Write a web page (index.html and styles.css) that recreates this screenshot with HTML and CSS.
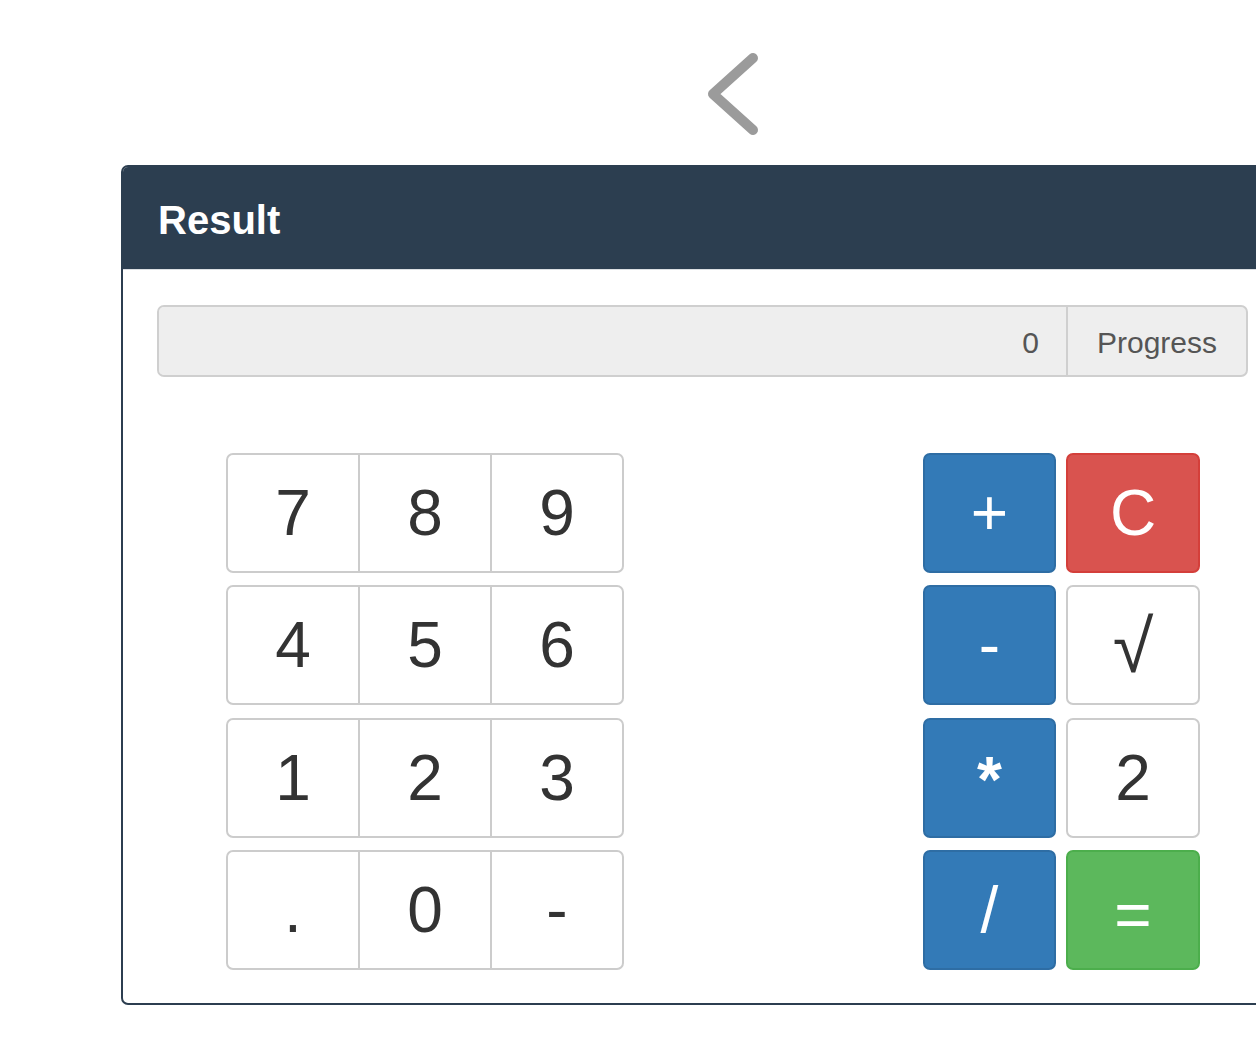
FILE: index.html
```html
<!DOCTYPE html>
<html lang="en">
<head>
<meta charset="utf-8">
<title>Calculator</title>
<link rel="stylesheet" href="styles.css">
</head>
<body>
<div class="pager">
  <a class="prev" href="#" aria-label="Previous">
    <svg width="70" height="100" viewBox="0 0 70 100">
      <polyline points="53,13 13,49 53,85" fill="none" stroke="#9b9b9b" stroke-width="10" stroke-linecap="round" stroke-linejoin="round"/>
    </svg>
  </a>
</div>
<div class="panel">
  <div class="panel-heading"><h3 class="panel-title">Result</h3></div>
  <div class="panel-body">
    <div class="input-group">
      <input class="display" type="text" value="0" readonly>
      <span class="addon">Progress</span>
    </div>
    <div class="pad">
      <div class="digits">
        <div class="btn-group"><button class="btn">7</button><button class="btn">8</button><button class="btn">9</button></div>
        <div class="btn-group"><button class="btn">4</button><button class="btn">5</button><button class="btn">6</button></div>
        <div class="btn-group"><button class="btn">1</button><button class="btn">2</button><button class="btn">3</button></div>
        <div class="btn-group"><button class="btn">.</button><button class="btn">0</button><button class="btn">-</button></div>
      </div>
      <div class="ops">
        <button class="btn op blue">+</button>
        <button class="btn op red">C</button>
        <button class="btn op blue">-</button>
        <button class="btn op white sqrt">√</button>
        <button class="btn op blue star">*</button>
        <button class="btn op white">2</button>
        <button class="btn op blue">/</button>
        <button class="btn op green eq">=</button>
      </div>
    </div>
  </div>
</div>
</body>
</html>
```
FILE: styles.css
```css
html, body {
  margin: 0;
  padding: 0;
  overflow: hidden;
  background: #fff;
  font-family: "Liberation Sans", Arial, Helvetica, sans-serif;
  color: #333;
}

.pager {
  height: 165px;
  box-sizing: border-box;
  padding: 45px 0 0 700px;
}

.prev {
  display: block;
  width: 70px;
  height: 100px;
}

.prev svg {
  display: block;
}

.panel {
  margin-left: 121px;
  width: 1163px;
  box-sizing: border-box;
  border: 2px solid #2c3e50;
  border-radius: 7px;
  background: #fff;
}

.panel-heading {
  background: #2c3e50;
  height: 102px;
  border-radius: 5px 5px 0 0;
  border-bottom: 1px solid #dcdfe3;
  padding-left: 35px;
  display: flex;
  align-items: center;
}

.panel-title {
  margin: 0;
  color: #fff;
  font-size: 40px;
  font-weight: bold;
  line-height: 1;
  padding-top: 4px;
}

.panel-body {
  padding: 35px 34px 33px 34px;
}

.input-group {
  display: flex;
  height: 72px;
  box-sizing: border-box;
  border: 2px solid #cfcfcf;
  border-radius: 7px;
  background: #eee;
  overflow: hidden;
}

.display {
  flex: 1;
  min-width: 0;
  border: 0;
  margin: 0;
  background: #eee;
  font-family: inherit;
  font-size: 30px;
  color: #555;
  text-align: right;
  padding: 3px 27px 0 0;
  outline: none;
}

.addon {
  width: 180px;
  box-sizing: border-box;
  border-left: 2px solid #cfcfcf;
  display: flex;
  align-items: center;
  justify-content: center;
  padding-top: 3px;
  font-size: 30px;
  color: #555;
}

.pad {
  display: flex;
  margin-top: 76px;
}

.digits {
  margin-left: 69px;
  display: flex;
  flex-direction: column;
  gap: 12.4px;
}

.btn-group {
  display: flex;
}

.btn {
  font-family: inherit;
  font-size: 64px;
  line-height: 1;
  color: #333;
  background: #fff;
  border: 2px solid #ccc;
  height: 120px;
  box-sizing: border-box;
  padding: 0;
  margin: 0;
  display: flex;
  align-items: center;
  justify-content: center;
}

.btn-group .btn {
  width: 134px;
  border-radius: 0;
}

.btn-group .btn + .btn {
  margin-left: -2px;
}

.btn-group .btn:first-child {
  border-radius: 7px 0 0 7px;
}

.btn-group .btn:last-child {
  border-radius: 0 7px 7px 0;
}

.ops {
  margin-left: 299px;
  display: grid;
  grid-template-columns: 133px 134px;
  grid-auto-rows: 120px;
  column-gap: 10px;
  row-gap: 12.4px;
}

.op {
  width: auto;
  border-radius: 7px;
}

.blue {
  background: #337ab7;
  border-color: #2e6da4;
  color: #fff;
}

.red {
  background: #d9534f;
  border-color: #d43f3a;
  color: #fff;
}

.green {
  background: #5cb85c;
  border-color: #4cae4c;
  color: #fff;
}

.white {
  background: #fff;
  color: #333;
}

.star {
  align-items: flex-start;
  padding-top: 28px;
  font-weight: bold;
}

.sqrt {
  font-size: 74px;
  padding-top: 4px;
}

.eq {
  padding-top: 10px;
}
```
